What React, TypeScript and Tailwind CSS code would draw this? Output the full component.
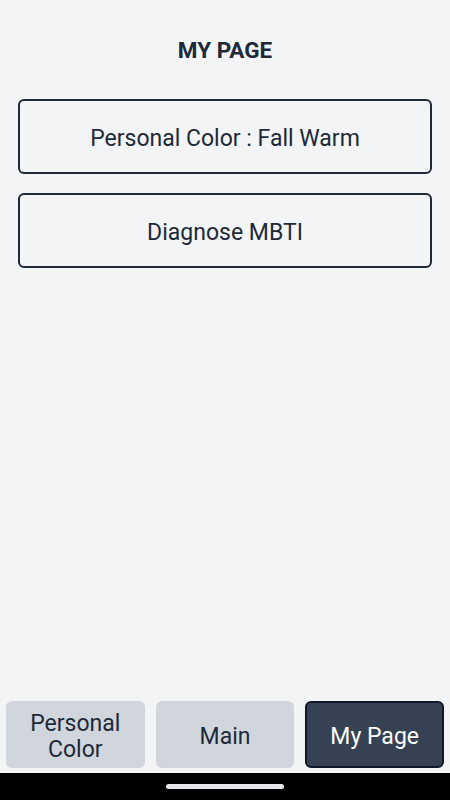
const tabs = [
  { label: 'Personal Color', active: false },
  { label: 'Main', active: false },
  { label: 'My Page', active: true },
]

function TabButton({ label, active }: { label: string; active: boolean }) {
  return (
    <button
      className={
        active
          ? 'flex h-[67px] items-center justify-center rounded-md border-2 border-gray-900 bg-gray-700 px-3 pt-1 text-[23px] leading-[26px] text-white'
          : 'flex h-[67px] items-center justify-center rounded-md bg-gray-300 px-3 pt-1 text-[23px] leading-[26px] text-gray-800'
      }
    >
      {label}
    </button>
  )
}

export default function App() {
  return (
    <div className="flex h-[800px] w-[450px] flex-col bg-gray-100 font-['Roboto',sans-serif] text-gray-800">
      <div className="flex flex-1 flex-col px-[18px]">
        <h1 className="pt-9 text-center text-[22.5px] leading-7 font-bold text-gray-800">MY PAGE</h1>
        <div className="mt-[35px] flex flex-col gap-[19px]">
          <button className="flex h-[75px] items-center justify-center rounded-md border-2 border-gray-800 pt-1.5 text-[23px]">
            Personal Color : Fall Warm
          </button>
          <button className="flex h-[75px] items-center justify-center rounded-md border-2 border-gray-800 pt-1.5 text-[23px]">
            Diagnose MBTI
          </button>
        </div>
      </div>
      <nav className="grid grid-cols-3 gap-[11px] px-1.5 pb-[5px]">
        {tabs.map((t) => (
          <TabButton key={t.label} label={t.label} active={t.active} />
        ))}
      </nav>
      <div className="flex h-[27px] items-center justify-center bg-black">
        <div className="h-[5px] w-[118px] rounded-full bg-gray-200" />
      </div>
    </div>
  )
}
